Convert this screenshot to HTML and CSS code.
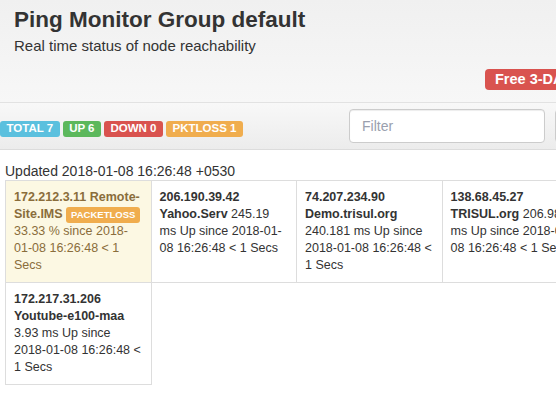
FILE: index.html
```html
<!DOCTYPE html>
<html lang="en">
<head>
<meta charset="utf-8">
<title>Ping Monitor Group default</title>
<link rel="stylesheet" href="styles.css">
</head>
<body>
<div class="page">
  <header class="hero">
    <h1 class="title">Ping Monitor Group default</h1>
    <p class="subtitle">Real time status of node reachability</p>
    <div class="promo"><span class="label label-danger promo-label">Free 3-DAY TRIAL</span></div>
  </header>

  <div class="toolbar">
    <div class="counts">
      <span class="label label-info">TOTAL 7</span>
      <span class="label label-success">UP 6</span>
      <span class="label label-danger">DOWN 0</span>
      <span class="label label-warning">PKTLOSS 1</span>
    </div>
    <input class="filter" type="text" placeholder="Filter">
    <button class="tool-btn" type="button">Reset</button>
  </div>

  <main class="content">
    <p class="updated">Updated 2018-01-08 16:26:48 +0530</p>
    <table class="nodes">
      <tr>
        <td class="node node-warn"><b>172.212.3.11 Remote-Site.IMS</b> <span class="label label-warning pkt">PACKETLOSS</span> 33.33 % since 2018-01-08 16:26:48 &lt; 1 Secs</td>
        <td class="node"><b>206.190.39.42 Yahoo.Serv</b> 245.19 ms Up since 2018-01-08 16:26:48 &lt; 1 Secs</td>
        <td class="node"><b>74.207.234.90 Demo.trisul.org</b> 240.181 ms Up since 2018-01-08 16:26:48 &lt; 1 Secs</td>
        <td class="node"><b>138.68.45.27 TRISUL.org</b> 206.987 ms Up since 2018-01-08 16:26:48 &lt; 1 Secs</td>
      </tr>
      <tr>
        <td class="node"><b>172.217.31.206 Youtube-e100-maa</b> 3.93 ms Up since 2018-01-08 16:26:48 &lt; 1 Secs</td>
      </tr>
    </table>
  </main>
</div>
</body>
</html>
```

FILE: styles.css
```css
html, body {
  margin: 0;
  padding: 0;
  overflow: hidden;
  background: #fff;
}

body {
  font-family: "Liberation Sans", Arial, sans-serif;
  color: #333;
  font-size: 14px;
}

.page {
  width: 740px;
}

.hero {
  padding: 7px 14px 13px;
  background: linear-gradient(to bottom, #f0f0f0 0%, #f7f7f7 100%);
  border-bottom: 1px solid #e2e2e2;
}

.title {
  margin: 0;
  font-size: 22.5px;
  line-height: 25px;
  font-weight: bold;
  color: #333;
}

.subtitle {
  margin: 4px 0 0;
  font-size: 15px;
  line-height: 20px;
}

.promo {
  margin: 13px 0 0 471px;
  height: 20px;
}

.label {
  display: inline-block;
  font-weight: bold;
  color: #fff;
  line-height: 1;
  white-space: nowrap;
  vertical-align: baseline;
  border-radius: 3px;
}

.promo-label {
  font-size: 14.5px;
  padding: 3px 10px 3px;
  border-radius: 4px;
}

.label-info { background: #5bc0de; }
.label-success { background: #5cb85c; }
.label-danger { background: #d9534f; }
.label-warning { background: #f0ad4e; }

.toolbar {
  display: flex;
  align-items: center;
  height: 46px;
  background: linear-gradient(to bottom, #f8f8f8 0%, #ececec 100%);
  border-bottom: 1px solid #dcdcdc;
}

.counts {
  flex: 0 0 349px;
  display: flex;
  gap: 3px;
  padding-top: 6px;
}

.counts .label {
  font-size: 11.5px;
  padding: 2px 6.5px 3px;
}

.filter {
  box-sizing: border-box;
  width: 196px;
  height: 34px;
  margin: 0 10px 0 0;
  padding: 6px 12px;
  font-family: "Liberation Sans", Arial, sans-serif;
  font-size: 14px;
  color: #555;
  background: #fff;
  border: 1px solid #ccc;
  border-radius: 4px;
  box-shadow: inset 0 1px 1px rgba(0,0,0,.075);
}

.filter::placeholder {
  color: #9a9fae;
}

.tool-btn {
  box-sizing: border-box;
  height: 34px;
  padding: 6px 12px;
  font-family: "Liberation Sans", Arial, sans-serif;
  font-size: 14px;
  color: #333;
  background: #fff;
  border: 1px solid #ccc;
  border-radius: 4px;
}

.content {
  padding: 12px 0 0 5px;
}

.updated {
  margin: 0;
  font-size: 14px;
  line-height: 18px;
}

.nodes {
  border-collapse: collapse;
  table-layout: fixed;
  width: 582px;
}

.node {
  width: 145.5px;
  box-sizing: border-box;
  padding: 8px;
  border: 1px solid #ddd;
  font-size: 12.5px;
  line-height: 17px;
  vertical-align: top;
  color: #333;
}

.node-warn {
  background: #fcf8e3;
  color: #8a6d3b;
}

.pkt {
  font-size: 9.5px;
  padding: 3px 5px 3.5px;
  border-radius: 3px;
}
```
